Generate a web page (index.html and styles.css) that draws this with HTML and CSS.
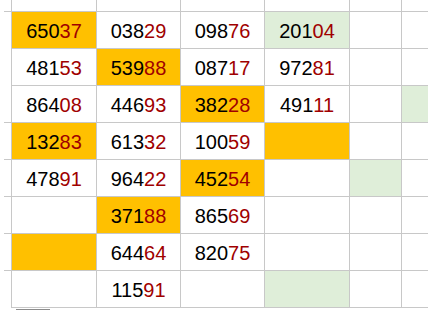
FILE: index.html
```html
<!DOCTYPE html>
<html>
<head>
<meta charset="utf-8">
<link rel="stylesheet" href="styles.css">
</head>
<body>
<div class="sheet">
  <div class="c edge ln"></div><div class="c"></div><div class="c"></div><div class="c"></div><div class="c"></div><div class="c"></div><div class="c last"></div>

  <div class="c edge"></div>
  <div class="c or">650<span class="r">37</span></div>
  <div class="c">038<span class="r">29</span></div>
  <div class="c">098<span class="r">76</span></div>
  <div class="c gr">201<span class="r">04</span></div>
  <div class="c"></div>
  <div class="c last"></div>

  <div class="c edge"></div>
  <div class="c">481<span class="r">53</span></div>
  <div class="c or">539<span class="r">88</span></div>
  <div class="c">087<span class="r">17</span></div>
  <div class="c">972<span class="r">81</span></div>
  <div class="c"></div>
  <div class="c last"></div>

  <div class="c edge ln"></div>
  <div class="c">864<span class="r">08</span></div>
  <div class="c">446<span class="r">93</span></div>
  <div class="c or">382<span class="r">28</span></div>
  <div class="c">491<span class="r">11</span></div>
  <div class="c"></div>
  <div class="c last gr"></div>

  <div class="c edge ln"></div>
  <div class="c or">132<span class="r">83</span></div>
  <div class="c">613<span class="r">32</span></div>
  <div class="c">100<span class="r">59</span></div>
  <div class="c or"></div>
  <div class="c"></div>
  <div class="c last"></div>

  <div class="c edge ln"></div>
  <div class="c">478<span class="r">91</span></div>
  <div class="c">964<span class="r">22</span></div>
  <div class="c or">452<span class="r">54</span></div>
  <div class="c"></div>
  <div class="c gr"></div>
  <div class="c last"></div>

  <div class="c edge ln"></div>
  <div class="c"></div>
  <div class="c or">371<span class="r">88</span></div>
  <div class="c">865<span class="r">69</span></div>
  <div class="c"></div>
  <div class="c"></div>
  <div class="c last"></div>

  <div class="c edge ln"></div>
  <div class="c or"></div>
  <div class="c">644<span class="r">64</span></div>
  <div class="c">820<span class="r">75</span></div>
  <div class="c"></div>
  <div class="c"></div>
  <div class="c last"></div>

  <div class="c edge"></div>
  <div class="c"></div>
  <div class="c">115<span class="r">91</span></div>
  <div class="c"></div>
  <div class="c gr"></div>
  <div class="c"></div>
  <div class="c last"></div>
</div>
<div class="bar"></div>
</body>
</html>
```

FILE: styles.css
```css
html, body {
  margin: 0;
  padding: 0;
  background: #ffffff;
  overflow: hidden;
}

.sheet {
  margin-left: 4px;
  display: grid;
  grid-template-columns: 8px 85px 84px 84px 85px 52px 26px;
  grid-template-rows: 12px repeat(8, 37px);
  font-family: "Liberation Sans", Arial, sans-serif;
  font-size: 20px;
  color: #000000;
}

.c {
  box-sizing: border-box;
  border-right: 1px solid #c8c8c8;
  border-bottom: 1px solid #c8c8c8;
  display: flex;
  align-items: center;
  justify-content: center;
  padding-top: 1px;
  line-height: 1;
  background: #ffffff;
}

.c.edge {
  border-bottom: none;
  padding: 0;
}

.c.edge.ln {
  border-bottom: 1px solid #c8c8c8;
}

.c.last {
  border-right: none;
}

.or {
  background: #ffc000;
}

.gr {
  background: #dfeed9;
}

.r {
  color: #a00000;
}

.bar {
  margin-left: 16px;
  margin-top: 1px;
  width: 34px;
  height: 2px;
  background: #8c8c8c;
}
```
